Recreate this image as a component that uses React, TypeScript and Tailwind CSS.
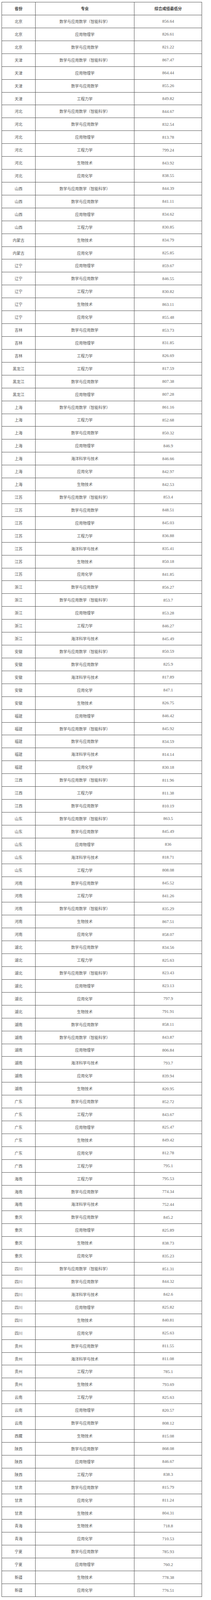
import React from 'react';

type Row = [string, string, string];

const SMART = '数学与应用数学（智能科学）';
const MATH = '数学与应用数学';
const PHYS = '应用物理学';
const MECH = '工程力学';
const BIO = '生物技术';
const CHEM = '应用化学';
const OCEAN = '海洋科学与技术';

const rows: Row[] = [
  ['北京', SMART, '856.64'],
  ['北京', PHYS, '826.61'],
  ['北京', MATH, '821.22'],
  ['天津', SMART, '867.47'],
  ['天津', PHYS, '864.44'],
  ['天津', MATH, '855.26'],
  ['天津', MECH, '849.82'],
  ['河北', SMART, '844.67'],
  ['河北', MATH, '832.54'],
  ['河北', PHYS, '813.78'],
  ['河北', MECH, '799.24'],
  ['河北', BIO, '843.92'],
  ['河北', CHEM, '838.55'],
  ['山西', SMART, '844.39'],
  ['山西', MATH, '841.11'],
  ['山西', PHYS, '834.62'],
  ['山西', MECH, '830.85'],
  ['内蒙古', BIO, '834.79'],
  ['内蒙古', CHEM, '825.85'],
  ['辽宁', PHYS, '859.67'],
  ['辽宁', MATH, '846.55'],
  ['辽宁', MECH, '830.82'],
  ['辽宁', BIO, '863.11'],
  ['辽宁', CHEM, '855.48'],
  ['吉林', MATH, '853.73'],
  ['吉林', PHYS, '831.85'],
  ['吉林', MECH, '826.69'],
  ['黑龙江', MECH, '817.59'],
  ['黑龙江', MATH, '807.38'],
  ['黑龙江', PHYS, '807.28'],
  ['上海', SMART, '861.16'],
  ['上海', MECH, '852.68'],
  ['上海', MATH, '850.32'],
  ['上海', PHYS, '846.9'],
  ['上海', OCEAN, '846.66'],
  ['上海', CHEM, '842.97'],
  ['上海', BIO, '842.53'],
  ['江苏', SMART, '853.4'],
  ['江苏', MATH, '848.51'],
  ['江苏', PHYS, '845.03'],
  ['江苏', MECH, '836.88'],
  ['江苏', OCEAN, '835.41'],
  ['江苏', BIO, '850.18'],
  ['江苏', CHEM, '841.85'],
  ['浙江', MATH, '856.27'],
  ['浙江', SMART, '853.7'],
  ['浙江', PHYS, '853.28'],
  ['浙江', MECH, '846.27'],
  ['浙江', OCEAN, '845.49'],
  ['安徽', SMART, '850.59'],
  ['安徽', MATH, '825.9'],
  ['安徽', OCEAN, '817.89'],
  ['安徽', CHEM, '847.1'],
  ['安徽', BIO, '826.75'],
  ['福建', PHYS, '846.42'],
  ['福建', SMART, '845.92'],
  ['福建', MATH, '834.59'],
  ['福建', OCEAN, '814.14'],
  ['福建', CHEM, '830.18'],
  ['江西', SMART, '811.96'],
  ['江西', MECH, '811.38'],
  ['江西', MATH, '810.19'],
  ['山东', SMART, '863.5'],
  ['山东', MATH, '845.49'],
  ['山东', PHYS, '836'],
  ['山东', OCEAN, '818.71'],
  ['山东', MECH, '808.08'],
  ['河南', MATH, '845.52'],
  ['河南', MECH, '841.26'],
  ['河南', SMART, '835.29'],
  ['河南', BIO, '867.51'],
  ['河南', CHEM, '858.07'],
  ['湖北', MATH, '834.56'],
  ['湖北', MECH, '825.63'],
  ['湖北', SMART, '823.43'],
  ['湖北', PHYS, '823.13'],
  ['湖北', CHEM, '797.9'],
  ['湖北', BIO, '791.91'],
  ['湖南', MATH, '858.11'],
  ['湖南', SMART, '843.87'],
  ['湖南', PHYS, '806.84'],
  ['湖南', OCEAN, '793.7'],
  ['湖南', CHEM, '839.94'],
  ['湖南', BIO, '820.95'],
  ['广东', MATH, '852.72'],
  ['广东', MECH, '843.67'],
  ['广东', PHYS, '825.47'],
  ['广东', BIO, '849.42'],
  ['广东', CHEM, '812.78'],
  ['广西', MECH, '795.1'],
  ['海南', MECH, '795.53'],
  ['海南', MATH, '774.34'],
  ['海南', OCEAN, '752.44'],
  ['重庆', MATH, '845.2'],
  ['重庆', PHYS, '825.89'],
  ['重庆', BIO, '838.73'],
  ['重庆', CHEM, '835.23'],
  ['四川', SMART, '851.31'],
  ['四川', MATH, '844.32'],
  ['四川', OCEAN, '842.6'],
  ['四川', PHYS, '825.82'],
  ['四川', BIO, '840.81'],
  ['四川', CHEM, '825.63'],
  ['贵州', MATH, '811.55'],
  ['贵州', OCEAN, '811.08'],
  ['贵州', MECH, '785.1'],
  ['贵州', BIO, '793.69'],
  ['云南', MECH, '825.63'],
  ['云南', PHYS, '820.57'],
  ['云南', MATH, '808.12'],
  ['西藏', BIO, '815.08'],
  ['陕西', MATH, '868.08'],
  ['陕西', PHYS, '846.67'],
  ['陕西', MECH, '838.3'],
  ['甘肃', MATH, '815.79'],
  ['甘肃', CHEM, '811.24'],
  ['甘肃', BIO, '804.31'],
  ['青海', BIO, '718.8'],
  ['青海', CHEM, '710.53'],
  ['宁夏', MATH, '785.93'],
  ['宁夏', PHYS, '760.2'],
  ['新疆', BIO, '778.38'],
  ['新疆', CHEM, '776.51'],
];

// sizes are in vw / vh so the table always fills the 540x4905 frame
const cell = 'flex min-h-0 items-center justify-center overflow-hidden border-r border-b border-[#4d4d4d]';
const num = "font-['Liberation_Serif','Noto_Sans_CJK_SC',serif] text-[2.04vw]";

export default function App() {
  return (
    <div className="bg-white pl-[0.83vw] pt-[0.125vh] font-['Noto_Sans_CJK_SC',sans-serif] text-[1.85vw] leading-none text-[#5c5c5c]">
      <div className="grid h-[99.68vh] w-[94.95vw] grid-cols-[15.75vw_47vw_1fr] grid-rows-[repeat(124,minmax(0,1fr))] border-l border-t border-[#4d4d4d]">
        {/* header */}
        <div className={`${cell} font-bold text-[#3a3a3a]`}>省份</div>
        <div className={`${cell} font-bold text-[#3a3a3a]`}>专业</div>
        <div className={`${cell} font-bold text-[#3a3a3a]`}>综合成绩最低分</div>

        {rows.map(([prov, major, score], i) => (
          <React.Fragment key={i}>
            <div className={cell}>{prov}</div>
            <div className={cell}>{major}</div>
            <div className={`${cell} ${num}`}>{score}</div>
          </React.Fragment>
        ))}
      </div>
    </div>
  );
}
